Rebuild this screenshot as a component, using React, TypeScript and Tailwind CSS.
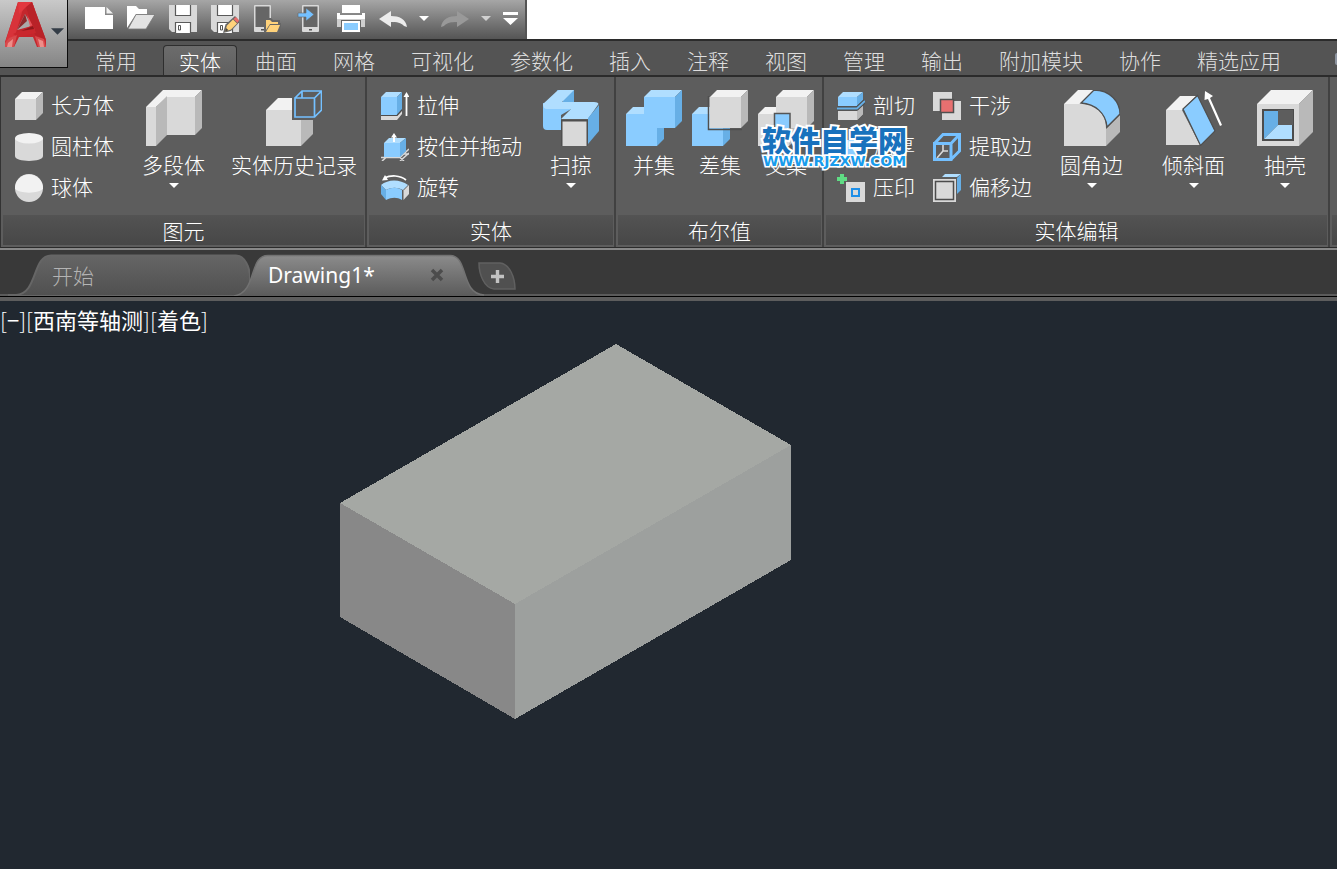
import React from 'react';

type IconProps = { className?: string };

const LIGHT = '#f2f2f2';
const FACE = '#d9d9d9';
const SHADE = '#b9b9b9';
const BLUE = '#8accff';
const BLUE_LIGHT = '#b0deff';
const BLUE_DARK = '#67afe6';
const RIBBON = '#5d5d5d';

const Small = ({ children }: { children: React.ReactNode }) => (
  <svg viewBox="0 0 28 28" className="block size-7 shrink-0" aria-hidden="true">
    {children}
  </svg>
);

const Big = ({ children }: { children: React.ReactNode }) => (
  <svg viewBox="0 0 56 56" className="block size-14 shrink-0" aria-hidden="true">
    {children}
  </svg>
);

/* ---------- quick access icons ---------- */

const Floppy = () => (
  <>
    <path d="M0 0H28V27H3L0 24Z" fill={FACE} />
    <path d="M6.500 -1H21.500V10.500H6.500Z" fill="#fff" stroke="#5a5a5a" strokeWidth="1.200" />
    <path d="M6.500 28V17.500H21.500V28" fill="#fff" stroke="#5a5a5a" strokeWidth="1.200" />
    <path d="M9.500 20.500H11.500V25H9.500Z" fill="#fff" stroke="#555" />
  </>
);

const NewIcon = () => (
  <Small>
    <path d="M0 2H20V10H28V24H0Z" fill="#fff" />
    <path d="M21.5 2L28 8.5H21.5Z" fill="#f2f2f2" />
  </Small>
);

const OpenIcon = () => (
  <Small>
    <path d="M0 24V1H9L12 4H20V9H9L0 23Z" fill="#fff" />
    <path d="M9 9.500H28L19 24H1Z" fill="#e3e3e3" stroke="#777" strokeWidth=".8" />
  </Small>
);

const SaveIcon = () => (
  <Small>
    <Floppy />
  </Small>
);

const SaveAsIcon = () => (
  <Small>
    <Floppy />
    <path d="M12 28L14.5 19.5L24 11L29 16.5L20 26Z" fill="#666" />
    <path d="M14 26.5L16 20.5L22 14.5L26 18.5L20 24.5Z" fill="#ffd27a" />
    <path d="M22.5 14L25 12L28 15.5L26.5 18Z" fill="#ec6a6a" />
    <path d="M14 26.5L15 23L17.5 25.3Z" fill="#444" />
  </Small>
);

const Phone = () => (
  <>
    <rect x="0" y="0" width="17" height="27" rx="1" fill={FACE} />
    <path d="M1.500 1.500H15.500V22H1.500Z" fill="#666" />
    <path d="M7 24H10V25.500H7Z" fill="#555" />
  </>
);

const OpenMobileIcon = () => (
  <Small>
    <g transform="translate(1)">
      <Phone />
    </g>
    <path d="M11 28V13H18L20 15H27V18H29L26 28Z" fill="#666" />
    <path d="M13 25V15H17L19 17H25V19H17Z" fill="#ffd27a" />
    <path d="M17 20H27L24 27H13Z" fill="#ffd27a" />
  </Small>
);

const SaveMobileIcon = () => (
  <Small>
    <g transform="translate(7)">
      <Phone />
    </g>
    <path d="M3 8H11V3L19 9.500L11 16V12H3Z" fill="#74c0ff" stroke="#666" strokeWidth=".6" />
  </Small>
);

const PrintIcon = () => (
  <Small>
    <path d="M5 0H23V8H5Z" fill="#fff" />
    <path d="M0 8H3V10H25V8H28V22H0Z" fill="#fff" />
    <path d="M0 14H28V22H0Z" fill="#cfcfcf" />
    <path d="M4 15H24V28H4Z" fill="#666" />
    <path d="M5 16H23V27H5Z" fill="#fff" />
    <path d="M7 18H21V25H7Z" fill={BLUE} />
  </Small>
);

const UndoIcon = ({ className }: IconProps) => (
  <svg viewBox="0 0 28 28" className={`block size-7 ${className ?? ''}`} aria-hidden="true">
    <path d="M0 14L12 6V11C20 11 27 14 28 22L25 21C22 17.500 18 17 12 17V22Z" fill="currentColor" />
  </svg>
);

const Caret = ({ className }: IconProps) => (
  <svg viewBox="0 0 10 5" className={`block h-[5px] w-[10px] ${className ?? ''}`} aria-hidden="true">
    <path d="M0 0H10L5 5Z" fill="currentColor" />
  </svg>
);

/* ---------- ribbon icons ---------- */

const BoxIcon = () => (
  <Small>
    <path d="M0 7L7 0H28L21 7Z" fill={LIGHT} />
    <path d="M0 7H21V28H0Z" fill={FACE} />
    <path d="M21 7L28 0V21L21 28Z" fill={SHADE} />
  </Small>
);

const CylinderIcon = () => (
  <Small>
    <path d="M0 5V23C0 29.500 28 29.500 28 23V5Z" fill={FACE} />
    <ellipse cx="14" cy="5.200" rx="14" ry="5.200" fill={LIGHT} />
  </Small>
);

const SphereIcon = () => (
  <Small>
    <circle cx="14" cy="14" r="14" fill={FACE} />
    <path d="M0 14.500A14 14 0 0 1 28 14.500C25 20 3 20 0 14.500Z" fill={LIGHT} />
  </Small>
);

const PolysolidIcon = () => (
  <Big>
    <path d="M0 17L17 0H56L49 7H21L10 17Z" fill={LIGHT} />
    <path d="M0 17H10V56H0Z" fill={FACE} />
    <path d="M10 17L21 6V45L10 56Z" fill={SHADE} />
    <path d="M21 7H49V45H21Z" fill={FACE} />
    <path d="M49 7L56 0V38L49 45Z" fill={SHADE} />
  </Big>
);

const HistoryIcon = () => (
  <Big>
    <path d="M0 20L12 8H36L35 20Z" fill={LIGHT} />
    <path d="M0 20H35V56H0Z" fill={FACE} />
    <path d="M35 20L47 8V44L35 56Z" fill={SHADE} />
    <path d="M26 6L32 -1H58V22L51 30H26Z" fill={RIBBON} />
    <path
      d="M29 8H48.500V27H29ZM29 8L36 1H55.500L48.500 8M55.500 1V20L48.500 27M36 1V8"
      fill="none"
      stroke="#74c0ff"
      strokeWidth="1.700"
    />
  </Big>
);

const ExtrudeIcon = () => (
  <Small>
    <path d="M0 24H16L21 18V22L16 28H0Z" fill={FACE} />
    <path d="M0 5L5 0H21L16 5Z" fill={BLUE_LIGHT} />
    <path d="M0 5H16V23H0Z" fill={BLUE} />
    <path d="M16 5L21 0V17L16 23Z" fill={BLUE_DARK} />
    <path d="M0 23.500H16L21 18" fill="none" stroke="#4c4c4c" strokeWidth="1.200" />
    <path d="M22.500 5L25.500 0L28.500 5H26.400V24H24.600V5Z" fill="#fff" />
  </Small>
);

const PressPullIcon = () => (
  <Small>
    <path
      d="M0 24.500H19L28 16M19 28L28 20M1 28L5 24.500M19 24.500L23 28M23 21H28"
      stroke={FACE}
      strokeWidth="1.600"
      fill="none"
    />
    <path d="M3 10L8 5H25L19 10Z" fill={BLUE_LIGHT} />
    <path d="M3 10H19V24H3Z" fill={BLUE} />
    <path d="M19 10L25 5V18L19 24Z" fill={BLUE_DARK} />
    <path d="M10 4.500L13 0L16 4.500H14V9H12V4.500Z" fill="#fff" />
  </Small>
);

const RevolveIcon = () => (
  <Small>
    <path d="M3 4C10 1 19 1 25 6" fill="none" stroke="#fff" strokeWidth="1.700" />
    <path d="M1 6.500L4 1L7 6Z" fill="#fff" />
    <path d="M0 11C7 5 19 5 27 11L22 16C16 13 11 13 5 16Z" fill={BLUE_LIGHT} />
    <path d="M0 11L5 16V26L0 20Z" fill={BLUE_DARK} />
    <path d="M5 16C11 13 16 13 21 16V26C16 23 11 23 5 26Z" fill={BLUE} />
    <path d="M22.500 16.500L28 11V20L22.500 26Z" fill={FACE} />
  </Small>
);

const SweepIcon = () => (
  <Big>
    <path d="M0 13V36Q0 40 4 40H18V25L30 18Z" fill={BLUE} />
    <path d="M14 0H31V12H20Z" fill={BLUE_DARK} />
    <path d="M0 14L14 1Q15 0 17 0H31L19 12H51Q55 12 55.500 14L45 29H18L28 19H4Q0 19 0 14Z" fill={BLUE_LIGHT} />
    <path d="M45 28L56 15V41L45 54Z" fill={BLUE_DARK} />
    <path d="M18 30H45V57H18Z" fill="#4f4f4f" />
    <path d="M19.500 31.500H43.500V56H19.500Z" fill={FACE} />
  </Big>
);

const UnionIcon = () => (
  <Big>
    <path d="M0 24L7 17H18V24Z" fill={BLUE_LIGHT} />
    <path d="M18 7L25 0H56L49 7Z" fill={BLUE_LIGHT} />
    <path d="M49 7L56 0V31L49 38Z" fill={BLUE_DARK} />
    <path d="M31 38H38V49L31 56Z" fill={BLUE_DARK} />
    <path d="M0 24H18V7H49V38H31V56H0Z" fill={BLUE} />
  </Big>
);

const SubtractIcon = () => (
  <Big>
    <path d="M0 24L7 17H18V24Z" fill={BLUE_LIGHT} />
    <path d="M0 24H18V38H31V56H0Z" fill={BLUE} />
    <path d="M31 38H38V49L31 56Z" fill={BLUE_DARK} />
    <path d="M16.500 6V39.500H50" fill="none" stroke="#4f4f4f" strokeWidth="1.500" />
    <path d="M18 7L25 0H56L49 7Z" fill={LIGHT} />
    <path d="M17.500 7H49V38H17.500Z" fill={FACE} />
    <path d="M49 7L56 0V31L49 38Z" fill={SHADE} />
  </Big>
);

const IntersectIcon = () => (
  <Big>
    <path d="M0 24L7 17H18V24Z" fill={LIGHT} />
    <path d="M0 24H31V56H0Z" fill={FACE} />
    <path d="M18 7L25 0H56L49 7Z" fill={LIGHT} />
    <path d="M18 7H49V38H18Z" fill={FACE} />
    <path d="M49 7L56 0V31L49 38Z" fill={SHADE} />
    <path d="M31 38H38V49L31 56Z" fill={SHADE} />
    <path d="M16.500 23.500H32V39H16.500Z" fill={BLUE} stroke="#555" strokeWidth="1.500" />
  </Big>
);

const SliceIcon = () => (
  <Small>
    <path d="M1 19H20L26 13V22L20 28H1Z" fill={FACE} />
    <path d="M20 19L26 13V22L20 28Z" fill={SHADE} />
    <path d="M1 5L6 0H26L20 5Z" fill={BLUE_LIGHT} />
    <path d="M1 5H20V14H1Z" fill={BLUE} />
    <path d="M20 5L26 0V8L20 14Z" fill={BLUE_DARK} />
    <path d="M0 16.500H20L28 9" fill="none" stroke="#4c4c4c" strokeWidth="4" />
    <path d="M0 16.500H20L28 9" fill="none" stroke={BLUE_DARK} strokeWidth="2" />
  </Small>
);

const ThickenIcon = () => (
  <Small>
    <path d="M1 14L8 7H27L20 14Z" fill={BLUE_LIGHT} />
    <path d="M1 14H20V24H1Z" fill={BLUE} />
    <path d="M20 14L27 7V17L20 24Z" fill={BLUE_DARK} />
  </Small>
);

const ImprintIcon = () => (
  <Small>
    <path d="M3 0H7V3H10V7H7V10H3V7H0V3H3Z" fill="#5fdc84" />
    <path d="M9 8H28V28H9Z" fill={FACE} />
    <path d="M15 15H22V22H15Z" fill="none" stroke="#1e8fe8" strokeWidth="2" />
  </Small>
);

const InterfereIcon = () => (
  <Small>
    <path d="M0 0H19V19H0Z" fill={FACE} />
    <path d="M9 9H28V28H9Z" fill={FACE} />
    <path d="M7.500 7.500H20.500V20.500H7.500Z" fill="#e87070" stroke="#505050" strokeWidth="1.500" />
  </Small>
);

const ExtractIcon = () => (
  <Small>
    <path d="M10 11V18H15M10 18L4 25" fill="none" stroke={FACE} strokeWidth="1.600" />
    <path
      d="M1.500 10.500H18V26.500H1.500ZM1.500 10.500L10 1.500H26.500L18 10.500M26.500 1.500V18L18 26.500"
      fill="none"
      stroke="#74c0ff"
      strokeWidth="3"
    />
  </Small>
);

const OffsetEdgeIcon = () => (
  <Small>
    <path d="M9 3L12 0H28L24 3Z" fill={BLUE_LIGHT} />
    <path d="M24 4L28 0V16L24 20Z" fill={BLUE_DARK} />
    <path d="M0 5H23V28H0Z" fill={FACE} />
    <path d="M2.500 7.500H20.500V25.500H2.500Z" fill={FACE} stroke="#4c4c4c" strokeWidth="1.500" />
  </Small>
);

const FilletIcon = () => (
  <Big>
    <path d="M0 14L14 0H31L18 14Z" fill={LIGHT} />
    <path d="M42 39L56 25V42L42 56Z" fill={SHADE} />
    <path d="M0 14H18C32 14 42 24 42 38V56H0Z" fill={FACE} />
    <path d="M17 13L30 0C46 0 56 12 56 24L43 37C42 23 31 14 17 13Z" fill={BLUE} stroke="#4f4f4f" strokeWidth="1.300" />
  </Big>
);

const TaperIcon = () => (
  <Big>
    <path d="M0 20L14 6H30L16 20Z" fill={LIGHT} />
    <path d="M0 20H16L34 55H0Z" fill={FACE} />
    <path d="M17 19L31.500 5.500L49 41L34.500 55.500Z" fill={BLUE} stroke="#4f4f4f" strokeWidth="1.200" />
    <path d="M39 1L47 6L44 8L56 35L54 36L42 9L38.500 10Z" fill="#fff" />
  </Big>
);

const ShellIcon = () => (
  <Big>
    <path d="M0 14L14 0H56L42 14Z" fill={LIGHT} />
    <path d="M0 14H42V56H0Z" fill={FACE} />
    <path d="M42 14L56 0V42L42 56Z" fill={SHADE} />
    <path d="M5 19H37V51H5Z" fill="#4c4c4c" />
    <path d="M21 20H36V35H21Z" fill={RIBBON} />
    <path d="M7 21H21V35L7 49Z" fill={BLUE_DARK} />
    <path d="M7 49L21 35H35V49Z" fill={BLUE_LIGHT} />
  </Big>
);

const AppLogo = () => (
  <svg viewBox="0 0 42 48" className="block h-12 w-[42px]" aria-hidden="true">
    <path d="M13 0H27L41 38V45H32L28 35H14L9 45H0V40Z" fill="#c4262c" />
    <path d="M13 0H20L10 34L0 41Z" fill="#d8333a" />
    <path d="M13 0H27L30 8L21 5L14 12Z" fill="#e2383e" />
    <path d="M27 0L41 38L30 33L21 5Z" fill="#b92228" />
    <path d="M20 12L27 24L12 28Z" fill="#aaa" />
    <path d="M20 12L22 19L12 28Z" fill="#8e2a2c" />
    <path d="M22 13L30 28L25 24Z" fill="#e55359" />
    <path d="M8 32L28 23L31 31L14 35Z" fill="#c9272d" />
    <path d="M16 29L28 24L29 27Z" fill="#8f181c" />
    <path d="M4 36L12 33L9 45H0V41Z" fill="#d8494c" />
    <path d="M3 41L8 37L7 45H2Z" fill="#ee8d88" />
    <path d="M30 34L39 37L41 45H33Z" fill="#d8494c" />
    <path d="M33 37L38 39L39 45H35Z" fill="#ee8d88" />
  </svg>
);

/* ---------- data ---------- */

const RIBBON_TABS = [
  '常用', '实体', '曲面', '网格', '可视化', '参数化', '插入', '注释',
  '视图', '管理', '输出', '附加模块', '协作', '精选应用',
];

const QUICK_ACTIONS = [
  { label: '新建', icon: <NewIcon /> },
  { label: '打开', icon: <OpenIcon /> },
  { label: '保存', icon: <SaveIcon /> },
  { label: '另存为', icon: <SaveAsIcon /> },
  { label: '从移动设备打开', icon: <OpenMobileIcon /> },
  { label: '保存到移动设备', icon: <SaveMobileIcon /> },
  { label: '打印', icon: <PrintIcon /> },
];

/* ---------- ribbon building blocks ---------- */

function Tool({ icon, label }: { icon: React.ReactNode; label: string }) {
  return (
    <button type="button" className="flex h-[41px] items-center gap-2 text-left whitespace-nowrap">
      {icon}
      <span className="pb-[2px]">{label}</span>
    </button>
  );
}

function BigTool({ icon, label, menu }: { icon: React.ReactNode; label: string; menu?: boolean }) {
  return (
    <button type="button" className="flex flex-col items-center self-start pt-[5px] whitespace-nowrap">
      {icon}
      <span className="mt-1 leading-7">{label}</span>
      {menu && <Caret className="mt-[5px]" />}
    </button>
  );
}

function Panel({ title, className, children }: { title: string; className: string; children: React.ReactNode }) {
  return (
    <section aria-label={title} className="flex shrink-0 flex-col border-r-2 border-[#414141]">
      <div className={`flex h-[138px] items-start pt-2 ${className}`}>{children}</div>
      <h2 className="mr-[1px] mb-[2px] ml-[2px] h-[30px] bg-linear-to-b from-[#535353] to-[#474747] text-center leading-[30px]">
        {title}
      </h2>
    </section>
  );
}

export default function App() {
  const [activeTab, setActiveTab] = React.useState('实体');

  return (
    <div className="relative flex min-h-screen flex-col overflow-hidden bg-[#212830] font-['Noto_Sans_CJK_SC',sans-serif] text-[21px] font-light text-white">
      <header className="grid h-[77px] shrink-0 grid-cols-[68px_1fr] grid-rows-[41px_34px] border-b-2 border-[#2b2b2b] bg-[#545454]">
        <button
          type="button"
          aria-label="应用程序菜单"
          className="z-10 row-span-2 flex h-[68px] items-start gap-1 self-start border-r border-b border-[#0c0c0c] bg-linear-to-b from-[#c9c9c9] to-[#858585] pt-[2px] pl-[5px]"
        >
          <AppLogo />
          <Caret className="mt-[26px] h-[7px] w-[13px] shrink-0 text-[#333c46]" />
        </button>

        <div className="flex h-[41px] border-b-2 border-[#2b2b2b] bg-white">
          <div className="flex items-center gap-[14px] border-r-2 border-[#555] bg-linear-to-b from-[#a6a6a6] to-[#555] pr-[7px] pb-[2px] pl-[17px]">
            {QUICK_ACTIONS.map((action) => (
              <button key={action.label} type="button" aria-label={action.label}>
                {action.icon}
              </button>
            ))}
            <div className="flex items-center gap-3">
              <button type="button" aria-label="放弃">
                <UndoIcon className="text-[#ececec]" />
              </button>
              <button type="button" aria-label="放弃列表">
                <Caret />
              </button>
              <button type="button" aria-label="重做">
                <UndoIcon className="-scale-x-100 text-[#999]" />
              </button>
              <button type="button" aria-label="重做列表">
                <Caret className="text-[#d0d0d0]" />
              </button>
              <button type="button" aria-label="自定义快速访问工具栏">
                <svg viewBox="0 0 15 13" className="block h-[13px] w-[15px]" aria-hidden="true">
                  <path d="M0 0H15V3H0ZM0 6H15L7.500 13Z" fill="#fff" />
                </svg>
              </button>
            </div>
          </div>
        </div>

        <nav className="flex h-[34px] items-end overflow-hidden pl-[9px] text-[#dedede]">
          {RIBBON_TABS.map((tab) => (
            <button
              key={tab}
              type="button"
              onClick={() => setActiveTab(tab)}
              className={
                tab === activeTab
                  ? 'ml-2 h-[30px] shrink-0 rounded-t-sm border border-b-0 border-[#2e2e2e] bg-linear-to-b from-[#6c6c6c] to-[#5f5f5f] px-[15px] leading-[26px] text-white'
                  : 'h-[30px] shrink-0 px-[18px] leading-7'
              }
            >
              {tab}
            </button>
          ))}
          <span className="mb-[10px] ml-auto h-3 w-[2px] rounded-l-sm bg-[#8d94a0]" />
        </nav>
      </header>

      <div className="flex shrink-0 overflow-hidden border-b border-l border-b-[#2b2b2b] border-l-[#333] bg-[#5d5d5d]">
        <Panel title="图元" className="pr-2 pl-[14px]">
          <div>
            <Tool icon={<BoxIcon />} label="长方体" />
            <Tool icon={<CylinderIcon />} label="圆柱体" />
            <Tool icon={<SphereIcon />} label="球体" />
          </div>
          <div className="ml-7 flex gap-[26px]">
            <BigTool icon={<PolysolidIcon />} label="多段体" menu />
            <BigTool icon={<HistoryIcon />} label="实体历史记录" />
          </div>
        </Panel>

        <Panel title="实体" className="pr-[15px] pl-[14px]">
          <div>
            <Tool icon={<ExtrudeIcon />} label="拉伸" />
            <Tool icon={<PressPullIcon />} label="按住并拖动" />
            <Tool icon={<RevolveIcon />} label="旋转" />
          </div>
          <div className="ml-[21px] flex">
            <BigTool icon={<SweepIcon />} label="扫掠" menu />
          </div>
        </Panel>

        <Panel title="布尔值" className="gap-[10px] pr-2 pl-[10px]">
          <BigTool icon={<UnionIcon />} label="并集" />
          <BigTool icon={<SubtractIcon />} label="差集" />
          <BigTool icon={<IntersectIcon />} label="交集" />
        </Panel>

        <Panel title="实体编辑" className="pr-[15px] pl-[13px]">
          <div>
            <Tool icon={<SliceIcon />} label="剖切" />
            <Tool icon={<ThickenIcon />} label="加厚" />
            <Tool icon={<ImprintIcon />} label="压印" />
          </div>
          <div className="ml-[18px]">
            <Tool icon={<InterfereIcon />} label="干涉" />
            <Tool icon={<ExtractIcon />} label="提取边" />
            <Tool icon={<OffsetEdgeIcon />} label="偏移边" />
          </div>
          <div className="ml-7 flex gap-[39px]">
            <BigTool icon={<FilletIcon />} label="圆角边" menu />
            <BigTool icon={<TaperIcon />} label="倾斜面" menu />
          </div>
          <div className="ml-8 flex">
            <BigTool icon={<ShellIcon />} label="抽壳" menu />
          </div>
        </Panel>

        <div className="flex grow flex-col justify-end pb-[2px] pl-[2px]">
          <div className="h-[30px] bg-linear-to-b from-[#535353] to-[#474747]" />
        </div>
      </div>

      <div className="flex h-[49px] shrink-0 items-end border-t-2 border-b border-t-[#888] border-b-black bg-[#393939] pl-2 shadow-[inset_0_-2px_0_#5b5b5b]">
        <button type="button" className="relative h-[42px] w-[242px] shrink-0 pl-11 text-left leading-[42px] text-[#b4b4b4]">
          <svg viewBox="0 0 242 42" preserveAspectRatio="none" className="absolute inset-0 size-full" aria-hidden="true">
            <defs>
              <linearGradient id="tab-idle" x1="0" y1="0" x2="0" y2="1">
                <stop offset="0" stopColor="#656565" />
                <stop offset="1" stopColor="#505050" />
              </linearGradient>
            </defs>
            <path
              d="M-8 41H8C30 40 24 1.500 43 1.500H228C237 1.500 242 14 242 24V42H0Z"
              fill="url(#tab-idle)"
              stroke="#666"
              strokeWidth="2"
            />
          </svg>
          <span className="relative">开始</span>
        </button>

        <div className="relative -ml-4 flex h-[42px] w-[250px] shrink-0 items-center pr-10 pl-[34px]">
          <svg viewBox="0 0 250 42" preserveAspectRatio="none" className="absolute inset-0 size-full" aria-hidden="true">
            <defs>
              <linearGradient id="tab-active" x1="0" y1="0" x2="0" y2="1">
                <stop offset="0" stopColor="#8b8b8b" />
                <stop offset="1" stopColor="#5b5b5b" />
              </linearGradient>
            </defs>
            <path d="M0 42C24 38 14 1.500 34 1.500H216C235 1.500 226 40 250 41V42Z" fill="url(#tab-active)" />
            <path
              d="M0 42C24 38 14 1.500 34 1.500H216C235 1.500 226 40 250 41"
              fill="none"
              stroke="#727272"
              strokeWidth="1.500"
            />
          </svg>
          <button
            type="button"
            className="relative grow text-left font-['Noto_Sans','Noto_Sans_CJK_SC',sans-serif] leading-[42px] font-normal"
          >
            Drawing1*
          </button>
          <button type="button" aria-label="关闭" className="relative">
            <svg viewBox="0 0 14 14" className="block size-[14px]" aria-hidden="true">
              <path d="M2 2L12 12M12 2L2 12" stroke="#4c4c4c" strokeWidth="3.500" />
            </svg>
          </button>
        </div>

        <button type="button" aria-label="新图形" className="mb-[6px] -ml-[6px] shrink-0">
          <svg viewBox="0 0 38 28" className="block h-7 w-[38px]" aria-hidden="true">
            <path d="M1 1H22C32 2 37 16 37 27H16C6 26 1 12 1 1Z" fill="#505050" stroke="#606060" strokeWidth="1.500" />
            <path d="M19.500 8V21M13 14.500H26" stroke="#c2c2c2" strokeWidth="3.400" />
          </svg>
        </button>
      </div>

      <main className="relative grow border-t-4 border-[#5d5d5d] font-normal">
        <p className="text-[22px] leading-9 whitespace-nowrap">
          <span className="font-light">[</span>−<span className="font-light">][</span>西南等轴测
          <span className="font-light">][</span>着色<span className="font-light">]</span>
        </p>
        <svg
          viewBox="0 0 452 376"
          shapeRendering="crispEdges"
          className="absolute top-[43px] left-[340px] h-[376px] w-[452px]"
          role="img"
          aria-label="长方体"
        >
          <path d="M276 0L451 101V216L175 375L0 273V159Z" fill="#a5a8a4" />
          <path d="M0 159L175 260V375L0 273Z" fill="#888" />
          <path d="M175 260L451 101V216L175 375Z" fill="#9da09e" />
        </svg>
      </main>

      <div className="pointer-events-none absolute top-[123px] left-[762px] flex flex-col items-center whitespace-nowrap">
        <span className="text-[29px] leading-8 font-black text-[#1872bd] [-webkit-text-stroke:4px_white] [paint-order:stroke_fill]">
          软件自学网
        </span>
        <span className="font-['DejaVu_Sans',sans-serif] text-[14px] leading-3 font-bold text-[#189cec] [-webkit-text-stroke:3px_white] [paint-order:stroke_fill]">
          WWW.RJZXW.COM
        </span>
      </div>
    </div>
  );
}
